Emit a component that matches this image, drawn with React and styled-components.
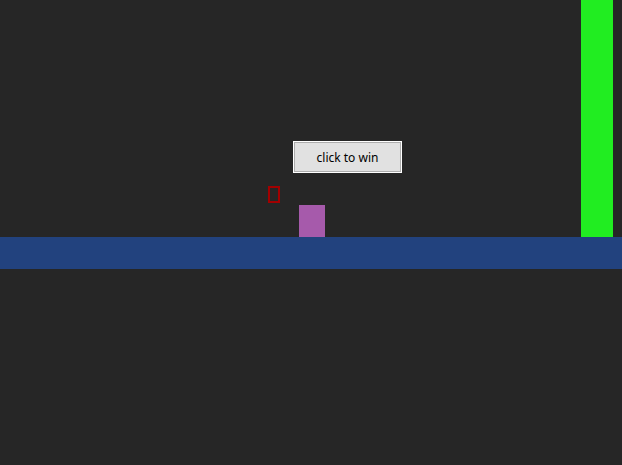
import React from 'react';
import styled, { createGlobalStyle } from 'styled-components';

const GlobalStyle = createGlobalStyle`
  html, body {
    margin: 0;
    padding: 0;
    background: #262626;
  }
`;

const Stage = styled.div`
  width: 622px;
  height: 465px;
  display: flex;
  flex-direction: column;
  background: #262626;
  overflow: hidden;
`;

const Sky = styled.div`
  position: relative;
  height: 237px;
  flex: none;
`;

const Ground = styled.div`
  height: 32px;
  flex: none;
  background: #22427e;
`;

const Wall = styled.div`
  position: absolute;
  top: 0;
  right: 9px;
  width: 32px;
  height: 100%;
  background: #21ed21;
`;

const Player = styled.div`
  position: absolute;
  left: ${(p) => p.x}px;
  top: ${(p) => p.y}px;
  width: 26px;
  height: 32px;
  background: #a65aab;
`;

const Hitbox = styled.div`
  position: absolute;
  left: ${(p) => p.x}px;
  top: ${(p) => p.y}px;
  width: 12px;
  height: 17px;
  box-sizing: border-box;
  border: 2px solid #a20000;
`;

const WinButton = styled.button`
  position: absolute;
  left: 293px;
  top: 141px;
  width: 109px;
  height: 32px;
  box-sizing: border-box;
  padding: 0;
  border: 1px solid #ffffff;
  outline: 1px solid #adadad;
  outline-offset: -2px;
  background: #e1e1e1;
  color: #000;
  font-family: 'Noto Sans', 'Open Sans', sans-serif;
  font-size: 12px;
  cursor: pointer;
`;

export default function App() {
  return (
    <>
      <GlobalStyle />
      <Stage>
        <Sky>
          <Wall />
          <WinButton>click to win</WinButton>
          <Hitbox x={268} y={186} />
          <Player x={299} y={205} />
        </Sky>
        <Ground />
      </Stage>
    </>
  );
}
